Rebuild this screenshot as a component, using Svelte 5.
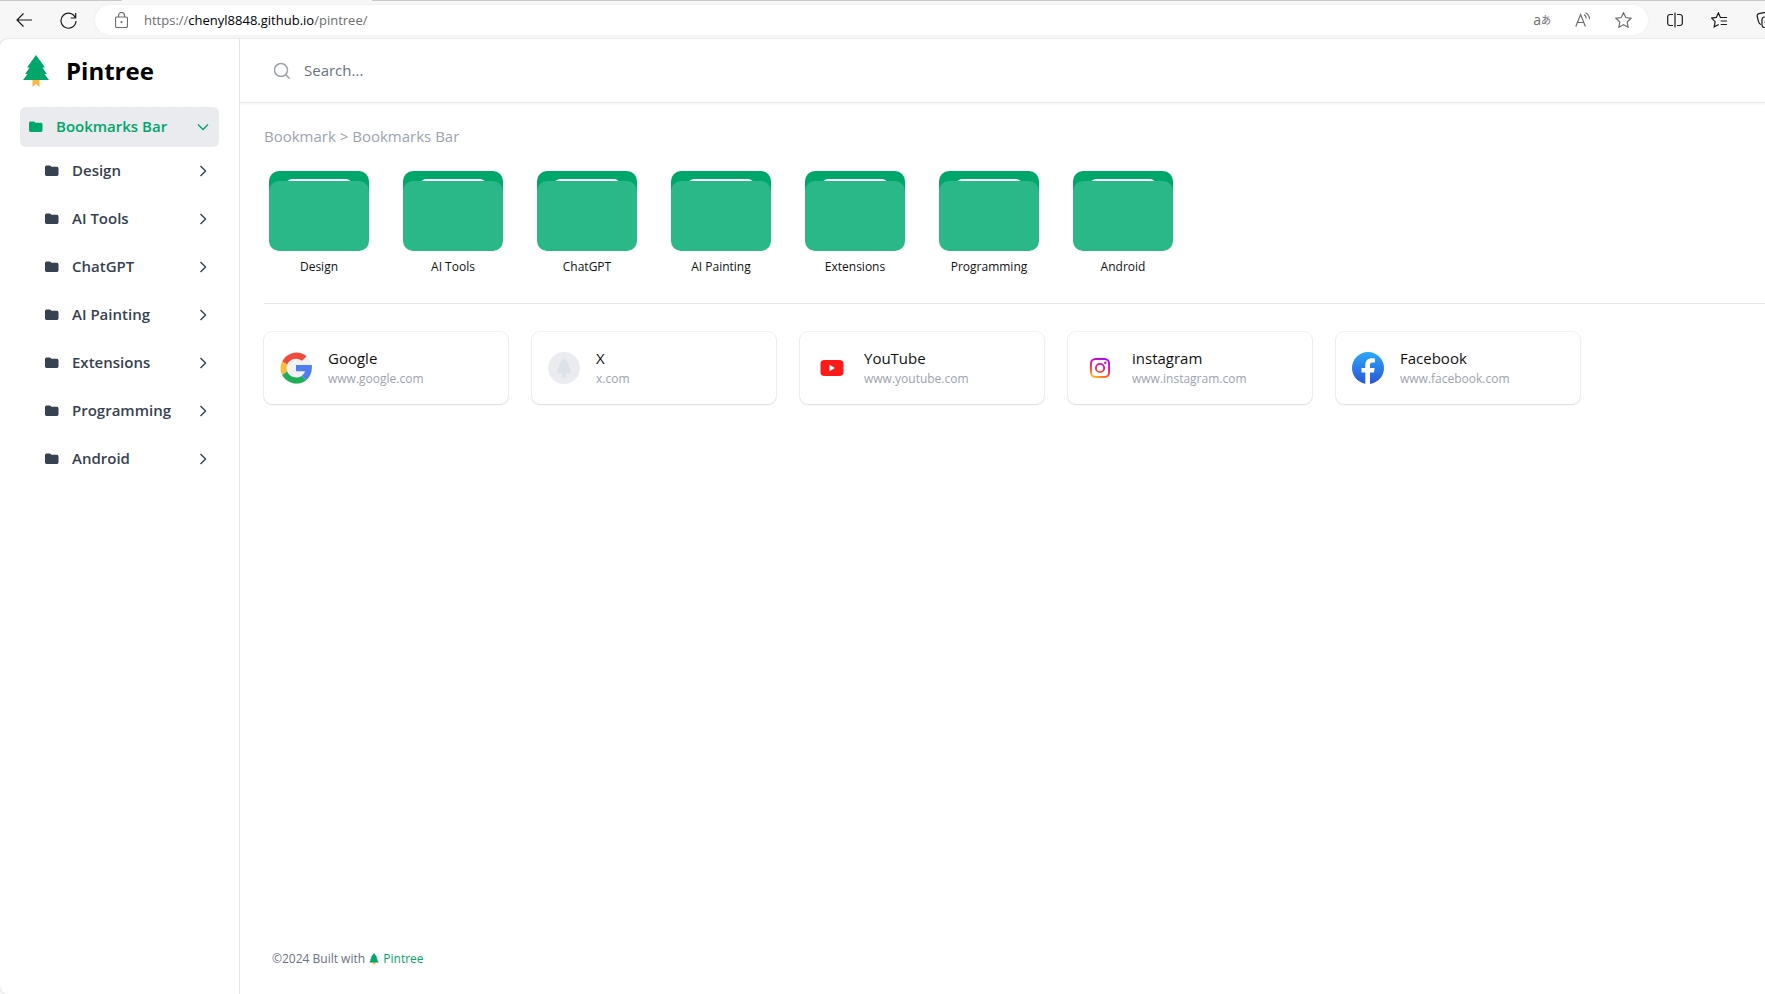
<script lang="ts">
	type Site = { title: string; host: string; url: string; icon: string };

	const folders = ['Design', 'AI Tools', 'ChatGPT', 'AI Painting', 'Extensions', 'Programming', 'Android'];

	const sites: Site[] = [
		{ title: 'Google', host: 'www.google.com', url: 'https://www.google.com', icon: 'google' },
		{ title: 'X', host: 'x.com', url: 'https://x.com', icon: 'tree' },
		{ title: 'YouTube', host: 'www.youtube.com', url: 'https://www.youtube.com', icon: 'youtube' },
		{ title: 'instagram', host: 'www.instagram.com', url: 'https://www.instagram.com', icon: 'instagram' },
		{ title: 'Facebook', host: 'www.facebook.com', url: 'https://www.facebook.com', icon: 'facebook' }
	];

	let open = $state(true);
	let query = $state('');

	const matches = (s: string) => s.toLowerCase().includes(query.trim().toLowerCase());
	let shownFolders = $derived(folders.filter(matches));
	let shownSites = $derived(sites.filter((s) => matches(s.title)));
</script>

{#snippet tree(size: number)}
	<svg class="tree" width={size} height={size} viewBox="0 0 32 32" aria-hidden="true">
		<path d="M12.5 23h7v9L16 28.8 12.5 32z" fill="#ffb63b" />
		<path d="M16 0l9 12.5h-2.6l4.4 6.5h-2.3L29 25H3l4.5-6H5.2l4.4-6.5H7z" fill="#00a76b" />
	</svg>
{/snippet}

{#snippet folderIcon()}
	<svg width="14" height="12" viewBox="0 0 14 12" fill="currentColor" aria-hidden="true">
		<path d="M0 2.2C0 1.2.8.5 1.8.5h2.7c.7 0 1 .2 1.5.7.3.4.6.5 1.1.5h4.6c1 0 1.8.7 1.8 1.7v5.8c0 1-.8 1.8-1.8 1.8H1.8C.8 11 0 10.2 0 9.2z" />
	</svg>
{/snippet}

<div class="browser">
	<div class="tabs"><span></span></div>
	<div class="toolbar">
		<button class="tool" aria-label="Back">
			<svg width="16" height="16" viewBox="0 0 16 16"><path d="M16 8H1M7.5 1.5L1 8l6.5 6.5" /></svg>
		</button>
		<button class="tool" aria-label="Reload">
			<svg width="17" height="17" viewBox="0 0 17 17"><path d="M15.5 6A7.500 7.500 0 1 0 16 9M15.7 1v5h-5" /></svg>
		</button>
		<div class="address">
			<svg width="13" height="16" viewBox="0 0 13 16"><rect x=".5" y="5" width="12" height="10.5" rx="1.5" /><path d="M3.5 5V3.5a3 3 0 0 1 6 0V5" /><circle cx="6.5" cy="10.2" r=".5" /></svg>
			<span class="url">https://<b>chenyl8848.github.io</b>/pintree/</span>
			<button class="translate" aria-label="Translate">a<span>あ</span></button>
			<button aria-label="Read aloud">
				<svg width="16" height="16" viewBox="0 0 16 16"><path d="M.8 14.5L5.6 2.5l4.8 12M2.5 10.5h6.2M9 2.500c1.4.8 2.2 2.3 2.2 4M10.5.7c2.5 1.3 4 3.6 4 6.5" /></svg>
			</button>
			<button aria-label="Add to favorites">
				<svg width="17" height="16" viewBox="0 0 17 16"><path d="M8.5.8l2.3 4.7 5.2.8-3.8 3.7.9 5.2-4.6-2.5-4.6 2.5.9-5.2L1 6.3l5.2-.8z" /></svg>
			</button>
		</div>
		<div class="extras">
			<button class="tool" aria-label="Split screen">
				<svg width="16" height="16" viewBox="0 0 16 16"><path d="M6 2.500H3A2.200 2.200 0 0 0 .7 4.700v6.600A2.200 2.200 0 0 0 3 13.500h3M10 2.500h3a2.200 2.200 0 0 1 2.300 2.200v6.600a2.200 2.200 0 0 1-2.300 2.200h-3M8 .5v15" /></svg>
			</button>
			<button class="tool" aria-label="Favorites">
				<svg width="17" height="16" viewBox="0 0 17 16"><path d="M9.700 5.500H9.400L7.400.9 5.300 5.400.6 6.100l3.500 3.600-.9 5.200 4.500-2.400M9.700 5.500H16M9.700 9H16M9.700 12.500H16" /></svg>
			</button>
			<button class="tool" aria-label="Collections">
				<svg width="18" height="16" viewBox="0 0 18 16"><path d="M5 12.500c-1.500-.3-2-1-2.300-2.300L1.200 4.500C.9 3 1.500 2.100 2.900 1.700L8 .6c1.400-.3 2.500.2 3 1.600" /><rect x="6" y="5" width="11" height="10.5" rx="2.5" /><path d="M8.500 10.200h6M11.500 7.200v6" /></svg>
			</button>
		</div>
	</div>

	<div class="page">
		<aside>
			<a class="brand" href="/pintree/">{@render tree(32)}<span>Pintree</span></a>
			<nav>
				<button class="item active" onclick={() => (open = !open)} aria-expanded={open}>
					{@render folderIcon()}
					<span>Bookmarks Bar</span>
					<svg class="chevron" width="12" height="12" viewBox="0 0 12 12"><path d="M1 3.5l5 5 5-5" /></svg>
				</button>
				{#if open}
					<ul>
						{#each folders as name}
							<li>
								<button class="item">
									{@render folderIcon()}
									<span>{name}</span>
									<svg class="chevron" width="12" height="12" viewBox="0 0 12 12"><path d="M3.5 1l5 5-5 5" /></svg>
								</button>
							</li>
						{/each}
					</ul>
				{/if}
			</nav>
		</aside>

		<div class="content">
			<header>
				<label for="search" aria-label="Search">
					<svg width="18" height="18" viewBox="0 0 18 18"><circle cx="7" cy="8" r="6.5" /><path d="M11.7 12.7l4 4" /></svg>
				</label>
				<input id="search" type="text" placeholder="Search..." bind:value={query} />
			</header>

			<main>
				<div class="breadcrumb"><a href="#bookmark">Bookmark</a> &gt; <a href="#bar">Bookmarks Bar</a></div>

				<div class="folders">
					{#each shownFolders as name}
						<button class="folder">
							<svg width="100" height="80" viewBox="0 0 100 80" aria-hidden="true">
								<rect width="100" height="50" rx="10" fill="#00a76b" />
								<rect x="17" y="8" width="66" height="20" rx="6" fill="#fff" />
								<rect y="10" width="100" height="70" rx="10" fill="#2bb888" />
							</svg>
							<span>{name}</span>
						</button>
					{/each}
				</div>

				<hr />

				<div class="cards">
					{#each shownSites as site}
						<a class="card" href={site.url}>
							<svg width="32" height="32" viewBox="0 0 32 32" aria-hidden="true">
								{#if site.icon === 'google'}
									<circle cx="16" cy="16" r="16" fill="#f1f1f2" />
									<path d="M2.2 9.500A16 16 0 0 1 26.600 4.200L22 8.800A9.800 9.800 0 0 0 7.200 12.500z" fill="#ef4a3c" />
									<path d="M2.200 9.500A16 16 0 0 0 2.200 23L7.200 19.500A9.800 9.800 0 0 1 7.200 12.500z" fill="#fbbc34" />
									<path d="M2.200 23A16 16 0 0 0 26.500 28L21.600 23.900A9.800 9.800 0 0 1 7.200 19.500z" fill="#1ead58" />
									<path d="M16 13h15.700C32.500 19 30.500 24.500 26.500 28L21.600 23.900C23.400 22.700 24.600 21 25 19.300H16z" fill="#4f7df0" />
								{:else if site.icon === 'tree'}
									<circle cx="16" cy="16" r="16" fill="#ebecef" />
									<path d="M16 6l5.500 7.500h-1.500l2.700 4H21.500l2.500 4h-6v5l-2-1.800-2 1.800v-5H8l2.500-4H9.300l2.700-4h-1.500z" fill="#dde1e8" />
								{:else if site.icon === 'youtube'}
									<rect x="4.5" y="8" width="23" height="16" rx="4" fill="#ff1a1a" />
									<path d="M13.5 12.800v6.400L19 16z" fill="#fff" />
								{:else if site.icon === 'instagram'}
									<defs>
										<linearGradient id="ig" x1=".2" y1="1" x2=".6" y2="0">
											<stop offset="0" stop-color="#ffc928" />
											<stop offset=".35" stop-color="#ff4438" />
											<stop offset=".65" stop-color="#f4099c" />
											<stop offset="1" stop-color="#a80cf0" />
										</linearGradient>
									</defs>
									<path
										d="M11.500 6h9a5.500 5.500 0 0 1 5.500 5.500v9a5.500 5.500 0 0 1-5.500 5.500h-9A5.500 5.500 0 0 1 6 20.500v-9A5.500 5.500 0 0 1 11.500 6zM11.500 7.900a3.600 3.600 0 0 0-3.600 3.600v9a3.600 3.600 0 0 0 3.600 3.600h9a3.600 3.600 0 0 0 3.600-3.600v-9a3.600 3.600 0 0 0-3.600-3.600zM16 10.900a5.100 5.100 0 1 1 0 10.200 5.100 5.100 0 0 1 0-10.200zM16 12.800a3.200 3.200 0 1 0 0 6.400 3.200 3.200 0 0 0 0-6.400zM21.300 9.500a1.200 1.200 0 1 1 0 2.400 1.200 1.200 0 0 1 0-2.400z"
										fill="url(#ig)"
										fill-rule="evenodd"
									/>
								{:else}
									<defs>
										<linearGradient id="fb" x1="0" y1="0" x2="0" y2="1">
											<stop offset="0" stop-color="#2aa9f8" />
											<stop offset="1" stop-color="#2b55d8" />
										</linearGradient>
									</defs>
									<circle cx="16" cy="16" r="16" fill="url(#fb)" />
									<path d="M13.300 32V20.500H9.500V16h3.800v-2.500c0-5 2.300-7.300 7-7.300.9 0 2 .2 2.700.4v4h-2.300c-2 0-2.700.9-2.700 2.700V16h4.700l-.8 4.500h-3.900v11.400A16 16 0 0 1 13.300 32z" fill="#fff" />
								{/if}
							</svg>
							<span class="info">
								<span class="title">{site.title}</span>
								<span class="host">{site.host}</span>
							</span>
						</a>
					{/each}
				</div>
			</main>

			<footer>©2024 Built with {@render tree(12)} <a href="/pintree/">Pintree</a></footer>
		</div>
	</div>
</div>

<style>
	:global(body) {
		margin: 0;
		background: #f7f7f7;
	}

	.browser {
		display: flex;
		flex-direction: column;
		min-height: 100vh;
		overflow: hidden;
		font-family: 'Open Sans', 'Noto Sans', sans-serif;
		font-size: 15px;
		line-height: 24px;
	}

	button {
		display: flex;
		align-items: center;
		padding: 0;
		border: none;
		background: none;
		color: inherit;
		font: inherit;
		cursor: pointer;
	}

	a {
		color: inherit;
		text-decoration: none;
	}

	svg {
		flex: none;
	}

	.tabs {
		height: 1px;
		background: #c9c9c9;
	}

	.tabs span {
		display: block;
		width: 250px;
		height: 1px;
		margin-left: 122px;
		background: #f7f7f7;
	}

	.toolbar {
		display: flex;
		align-items: center;
		height: 38px;
		padding-left: 16px;
	}

	.toolbar svg {
		fill: none;
		stroke: currentColor;
		stroke-width: 1.2;
	}

	.tool {
		margin-right: 28px;
		color: #1b1b1b;
	}

	.tool + .address {
		margin-left: -10px;
	}

	.address {
		flex: 1;
		display: flex;
		align-items: center;
		gap: 24px;
		height: 30px;
		padding: 0 16px 0 20px;
		border-radius: 15px;
		background: #fff;
		box-shadow: 0 0 3px #0000000d;
		color: #6e6e6e;
	}

	.url {
		flex: 1;
		margin-left: -8px;
		font-size: 13px;
	}

	.url b {
		font-weight: 400;
		color: #000;
	}

	.translate {
		font-size: 14px;
	}

	.translate span {
		font-family: 'Noto Sans CJK JP', sans-serif;
		font-size: 10px;
	}

	.extras {
		display: flex;
		box-sizing: border-box;
		width: 117px;
		padding-left: 19px;
	}

	.page {
		flex: 1;
		display: flex;
		border-radius: 8px 0 0 8px;
		background: #fff;
		box-shadow: 0 0 2px #00000030;
	}

	aside {
		box-sizing: border-box;
		width: 240px;
		padding: 0 20px;
		border-right: 1px solid #e5e7eb;
	}

	.brand {
		display: flex;
		align-items: center;
		gap: 14px;
		height: 64px;
		font-size: 24px;
		font-weight: 700;
		color: #000;
	}

	nav {
		padding-top: 4px;
	}

	.item {
		box-sizing: border-box;
		width: 100%;
		height: 40px;
		gap: 13px;
		padding: 0 10px 0 9px;
		border-radius: 6px;
		font-size: 15px;
		font-weight: 600;
		color: #374151;
	}

	.item.active {
		background: #e9ebee;
		color: #00a76b;
	}

	.item span {
		flex: 1;
		padding-bottom: 2px;
		text-align: left;
	}

	.chevron {
		fill: none;
		stroke: currentColor;
		stroke-width: 1.4;
	}

	ul {
		display: flex;
		flex-direction: column;
		gap: 8px;
		margin: 4px 0 0;
		padding: 0 0 0 16px;
		list-style: none;
	}

	.content {
		flex: 1;
		display: flex;
		flex-direction: column;
		min-width: 0;
	}

	header {
		display: flex;
		align-items: center;
		gap: 12px;
		box-sizing: border-box;
		height: 64px;
		padding: 0 34px;
		border-bottom: 1px solid #e5e7eb;
		box-shadow: 0 1px 2px #0000000d;
	}

	label {
		display: flex;
	}

	label svg {
		fill: none;
		stroke: #9ca3af;
		stroke-width: 1.5;
	}

	input {
		flex: 1;
		padding: 0 0 2px;
		border: none;
		outline: none;
		font: inherit;
		color: #374151;
	}

	input::placeholder {
		color: #6b7280;
		opacity: 1;
	}

	main {
		flex: 1;
		padding: 21px 0 0 24px;
	}

	.breadcrumb {
		color: #9ca3af;
	}

	.folders {
		display: grid;
		grid-template-columns: repeat(auto-fill, 110px);
		gap: 24px;
		margin-top: 23px;
	}

	.folder {
		flex-direction: column;
		gap: 4px;
		font-size: 12px;
		color: #111;
	}

	hr {
		height: 1px;
		margin: 24px 0 28px;
		border: none;
		background: #e5e7eb;
	}

	.cards {
		display: grid;
		grid-template-columns: repeat(auto-fill, 244px);
		gap: 24px;
	}

	.card {
		display: flex;
		align-items: center;
		gap: 16px;
		padding: 15px 16px;
		border-radius: 8px;
		background: #fff;
		box-shadow:
			0 0 0 1px #1118270d,
			0 1px 2px #0000001a;
	}

	.info {
		display: flex;
		flex-direction: column;
	}

	.title {
		line-height: 22px;
		color: #111;
	}

	.host {
		font-size: 12px;
		line-height: 20px;
		color: #9ca3af;
	}

	footer {
		padding: 0 32px 23px;
		font-size: 12px;
		color: #6b7280;
	}

	footer a {
		color: #00a76b;
	}

	footer .tree {
		vertical-align: -2px;
	}
</style>
